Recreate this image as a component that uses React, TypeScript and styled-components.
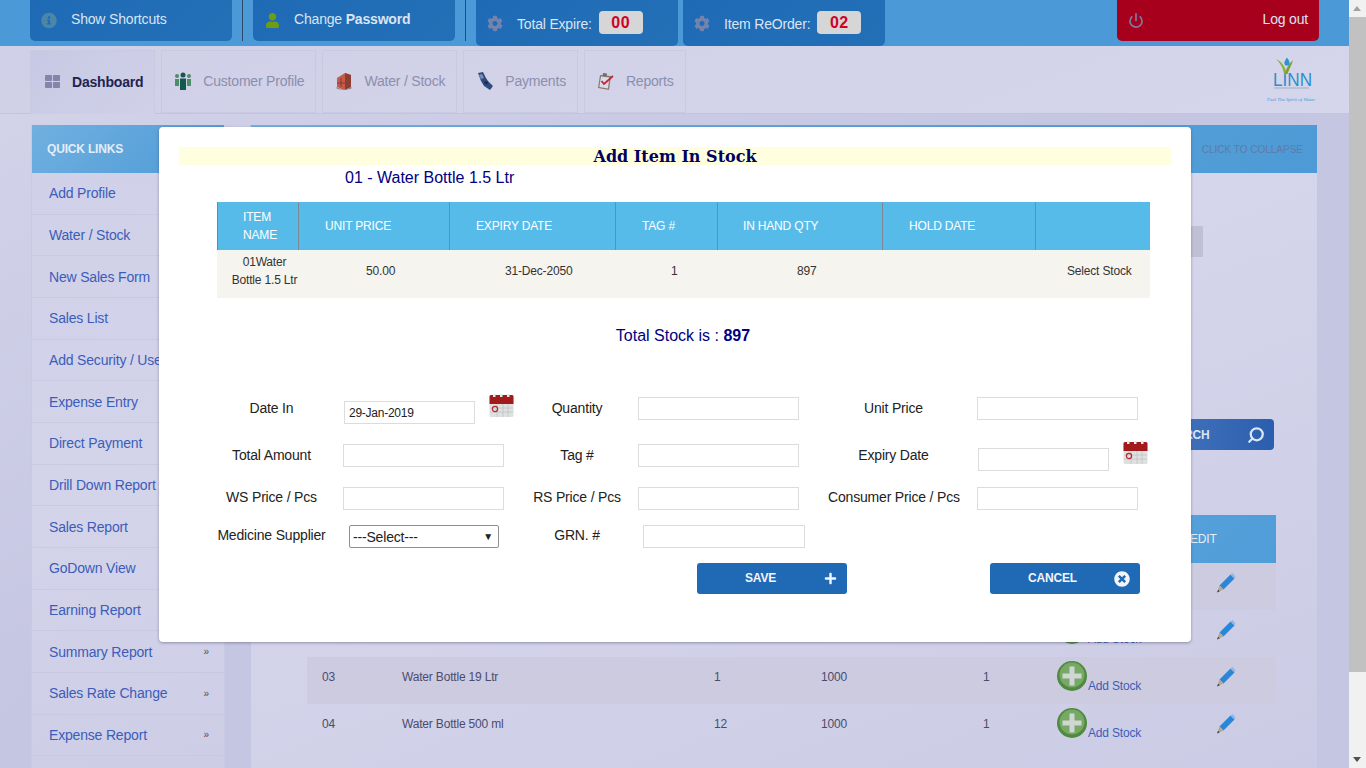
import React from "react"
import styled, { createGlobalStyle } from "styled-components"
import { FaCog, FaInfoCircle, FaPlus, FaThLarge, FaTimesCircle, FaUser } from "react-icons/fa"
import { Power, Search } from "lucide-react"

const GlobalStyle = createGlobalStyle`
  * {
    box-sizing: border-box;
  }

  html,
  body {
    margin: 0;
    height: 100%;
    overflow: hidden;
  }

  body {
    font-family: "Liberation Sans", Arial, sans-serif;
    font-size: 14px;
    letter-spacing: -0.18px;
  }
`

const Shell = styled.div`
  display: flex;
  height: 768px;
  overflow: hidden;
`

const Page = styled.div`
  position: relative;
  flex: 1;
  min-width: 0;
  background: linear-gradient(160deg, #cfcfe7 0%, #d5d6eb 48%, #cbcbe5 100%);
`

const ScrollTrack = styled.div`
  position: relative;
  width: 17px;
  background: #f1f1f1;
`

const ScrollThumb = styled.div`
  position: absolute;
  top: 17px;
  left: 0;
  width: 17px;
  height: 655px;
  background: #c1c1c1;
`

const ScrollArrow = styled.div<{ $down?: boolean }>`
  position: absolute;
  left: 4px;
  width: 0;
  height: 0;
  border-left: 4.5px solid transparent;
  border-right: 4.5px solid transparent;
  ${(p) =>
    p.$down
      ? "bottom: 6px; border-top: 5px solid #505050;"
      : "top: 6px; border-bottom: 5px solid #a3a3a3;"}
`

const TopBar = styled.div`
  display: flex;
  height: 46px;
  padding: 0 30px;
  background: #4b99d6;
`

const TopButton = styled.div<{ $tall?: boolean; $danger?: boolean }>`
  display: flex;
  align-items: center;
  width: 202px;
  height: ${(p) => (p.$tall ? 46 : 41)}px;
  padding: 0 11px;
  border-radius: 0 0 5px 5px;
  color: #dbe4f2;
  background: ${(p) => (p.$danger ? "#a6001c" : "linear-gradient(135deg, #1e6ab5, #2470b7)")};
`

const TopIcon = styled.span<{ $color: string }>`
  display: flex;
  justify-content: center;
  width: 16px;
  margin-right: 14px;
  color: ${(p) => p.$color};
`

const TopText = styled.span<{ $drop?: boolean }>`
  margin-top: ${(p) => (p.$drop ? 1 : -3)}px;
  white-space: nowrap;
`

const LogoutText = styled(TopText)`
  margin-left: auto;
`

const TopDivider = styled.div`
  width: 1px;
  height: 41px;
  margin: 0 10px;
  background: #2b4a6b;
`

const CountBadge = styled.span`
  display: flex;
  align-items: center;
  justify-content: center;
  width: 44px;
  height: 23px;
  margin-left: 7px;
  border-radius: 4px;
  background: #d6d6d6;
  color: #d0002a;
  font-size: 16px;
  font-weight: 700;
  letter-spacing: 0.5px;
`

const ExpireButton = styled(TopButton)`
  margin-right: 5px;

  ${CountBadge} {
    margin-top: -1px;
  }
`

const LogoutButton = styled(TopButton)`
  margin-left: auto;
  padding-right: 11px;
`

const NavBar = styled.div`
  display: flex;
  height: 68px;
  padding: 4px 32px 0 30px;
  border-bottom: 1px solid #c3c4df;
  letter-spacing: -0.2px;
`

const Tab = styled.div<{ $active?: boolean }>`
  display: flex;
  align-items: center;
  gap: 10px;
  margin-right: 6px;
  padding: 0 11px 2px;
  border: 1px solid #c9cae2;
  border-bottom: ${(p) => (p.$active ? "none" : "1px solid #c9cae2")};
  background: ${(p) => (p.$active ? "linear-gradient(135deg, #c7c8e3, #d0d1e8)" : "transparent")};
  color: ${(p) => (p.$active ? "#1f2350" : "#8b8fae")};
  font-weight: ${(p) => (p.$active ? 700 : 400)};
  height: ${(p) => (p.$active ? "64px" : "63px")};
`

const TabIcon = styled.span<{ $color?: string }>`
  display: flex;
  justify-content: center;
  width: 20px;
  color: ${(p) => p.$color || "inherit"};
`

const Logo = styled.div`
  margin: 5px 0 0 auto;
`

const Body = styled.div`
  display: flex;
  gap: 25px;
  height: 654px;
  padding: 11px 31px 0 31px;
  background: linear-gradient(150deg, #d2d2e9 0%, #c5c6e2 42%);
`

const Sidebar = styled.div`
  flex: none;
  width: 194px;
  background: linear-gradient(170deg, #d0d0e8, #d3d4ea 60%, #cdcde6);
  border-right: 1px solid #c8c9e2;
  border-left: 1px solid #c8c9e2;
`

const BlueHeader = styled.div`
  display: flex;
  align-items: center;
  height: 48px;
  padding: 0 15px;
  background: linear-gradient(135deg, #71b0e0, #4c9ad6);
`

const QuickTitle = styled.span`
  color: #e3edf7;
  font-size: 12px;
  font-weight: 700;
`

const CollapseText = styled.span`
  margin: 0 -1px 0 auto;
  color: #5f7ba6;
  font-size: 10px;
  letter-spacing: 0;
`

const SideItem = styled.div`
  display: flex;
  align-items: center;
  justify-content: space-between;
  height: 41.67px;
  padding: 0 15px 0 17px;
  border-bottom: 1px solid #c8c9e2;
  color: #3b5db9;
  white-space: nowrap;
`

const Chevron = styled.span`
  color: #4a4a60;
  font-size: 10px;
`

const MainPanel = styled.div`
  flex: 1;
  min-width: 0;
  height: 643px;
  border-right: 1px solid #c4c5e0;
  border-left: 1px solid #c4c5e0;
  background: linear-gradient(160deg, #d3d4ea, #d5d6eb 40%, #cbcbe5);
`

const PanelBody = styled.div`
  display: flex;
  flex-direction: column;
  height: 595px;
  padding: 53px 41px 0 56px;
`

const GreyStub = styled.div`
  align-self: flex-end;
  width: 60px;
  height: 31px;
  margin-right: 73px;
  background: #c0c0d4;
`

const SearchButton = styled.div`
  display: flex;
  align-items: center;
  justify-content: space-between;
  align-self: flex-end;
  width: 150px;
  height: 31px;
  margin: 162px 2px 0 0;
  padding: 0 9px 0 36px;
  border-radius: 0 4px 4px 0;
  background: linear-gradient(90deg, #4f7cc2, #2a5eae);
  color: #dde6f3;
  font-size: 12px;
  font-weight: 700;
`

const StockTable = styled.div`
  margin-top: 65px;
`

const StockRow = styled.div<{ $head?: boolean; $shade?: boolean }>`
  display: grid;
  grid-template-columns: 95px 312px 107px 162px 74px 159px 60px;
  height: ${(p) => (p.$head ? 48 : 47)}px;
  padding-top: ${(p) => (p.$head ? 0 : 10)}px;
  background: ${(p) =>
    p.$head
      ? "linear-gradient(135deg, #78b4e2, #4f9dd9)"
      : p.$shade
        ? "#cdcbe0"
        : "transparent"};
  color: #4b4b6e;
  font-size: 12px;
  line-height: 20px;
`

const RowCode = styled.span`
  padding-left: 15px;
`

const HeadEdit = styled.span`
  grid-column: 6 / 8;
  align-self: center;
  padding-left: 133px;
  color: #e3edf7;
`

const AddStock = styled.span`
  display: flex;
  align-items: flex-end;
  margin-top: -6px;
  height: 30px;
  color: #3b5db9;
`

const AddStockLabel = styled.span`
  margin: 0 0 -2px 1px;
  line-height: 14px;
`

const EditCell = styled.span`
  display: flex;
`

const Modal = styled.div`
  position: absolute;
  top: 127px;
  left: 159px;
  width: 1032px;
  height: 515px;
  padding: 20px 20px 0;
  border-radius: 4px;
  background: #fff;
  box-shadow: 0 1px 3px rgba(60, 60, 90, 0.45);
`

const ModalTitle = styled.div`
  height: 18px;
  background: #ffffe0;
  color: #000060;
  font-family: "DejaVu Serif", "Liberation Serif", serif;
  font-size: 16px;
  font-weight: 700;
  letter-spacing: 0;
  line-height: 20px;
  text-align: center;
`

const ItemName = styled.div`
  height: 37px;
  padding: 4px 0 0 166px;
  color: #000080;
  font-size: 16px;
  letter-spacing: 0;
  line-height: 18px;
`

const Grid = styled.div`
  margin: 0 21px 0 38px;
  font-size: 12px;
`

const GridRow = styled.div<{ $head?: boolean }>`
  display: grid;
  grid-template-columns: 81px 151px 166px 102px 165px 153px 115px;
  align-items: center;
  height: 48px;
  padding-bottom: ${(p) => (p.$head ? 0 : 6)}px;
  background: ${(p) => (p.$head ? "#57bbea" : "#f5f4ef")};
  color: ${(p) => (p.$head ? "#fff" : "#333")};
  line-height: 18px;
`

const HeadCell = styled.div<{ $inset?: number }>`
  display: flex;
  align-items: center;
  height: 100%;
  padding-left: ${(p) => p.$inset || 0}px;
  border-left: 1px solid #7d8794;
`

const NameHead = styled(HeadCell)`
  padding-right: 25px;
`

const DataCell = styled.div<{ $inset?: number; $center?: boolean }>`
  padding-left: ${(p) => p.$inset || 0}px;
  text-align: ${(p) => (p.$center ? "center" : "left")};
  white-space: nowrap;
`

const TotalLine = styled.div`
  height: 99px;
  padding: 29px 0 0 16px;
  color: #000080;
  font-size: 16px;
  letter-spacing: 0;
  line-height: 18px;
  text-align: center;
`

const FormGrid = styled.div`
  display: grid;
  grid-template-columns: 109px 198px 106px 198px 131px 191px;
  grid-template-rows: 47px 43px 38px 38px;
  margin-left: 38px;
  color: #222;
`

const FieldLabel = styled.div<{ $up?: boolean }>`
  margin-top: ${(p) => (p.$up ? -1 : 0)}px;
  line-height: 23px;
  text-align: center;
  white-space: nowrap;
`

const Field = styled.div<{ $inset: number; $drop?: boolean }>`
  display: flex;
  align-items: flex-start;
  gap: 14px;
  padding-left: ${(p) => p.$inset}px;
  padding-top: ${(p) => (p.$drop ? 4 : 0)}px;
`

const TextInput = styled.input<{ $narrow?: boolean }>`
  width: ${(p) => (p.$narrow ? 131 : 161)}px;
  height: 23px;
  padding: 0 4px;
  border: 1px solid #dcdcdc;
  outline: none;
  background: #fff;
  color: #222;
  font-family: inherit;
  font-size: 12px;
  letter-spacing: -0.25px;
`

const WideInput = styled(TextInput)`
  width: 162px;
`

const DateIcon = styled.span`
  display: flex;
  margin-top: -8px;
`

const SupplierSelect = styled.div`
  display: flex;
  align-items: center;
  justify-content: space-between;
  width: 150px;
  height: 23px;
  padding: 0 5px 0 3px;
  border: 1px solid #8f8f8f;
  border-radius: 2px;
  color: #222;
`

const SelectArrow = styled.span`
  font-size: 10px;
`

const Actions = styled.div`
  display: flex;
  justify-content: flex-end;
  gap: 143px;
  margin-right: 31px;
`

const ActionButton = styled.div<{ $inset: number }>`
  display: flex;
  align-items: center;
  justify-content: space-between;
  width: 150px;
  height: 31px;
  padding: 0 10px 0 ${(p) => p.$inset}px;
  border-radius: 3px;
  background: #2069b5;
  color: #f2f5fa;
  font-size: 12px;
  font-weight: 700;
`

const ActionLabel = styled.span`
  margin-top: -2px;
`

const Calendar = () => (
  <svg width="25" height="25" viewBox="0 0 25 25">
    <rect x="0.5" y="2" width="24" height="22" rx="1.5" fill="#dfe0e0" />
    <path d="M.5 11V3.500A1.500 1.500 0 0 1 2 2h21a1.500 1.500 0 0 1 1.500 1.500V11z" fill="#a31a1c" />
    <path d="M4 1h2.500v3H4zM11 1h2.500v3H11zM18 1h2.500v3H18z" fill="#e8e8e8" />
    <path d="M1 15h23M1 19h23M8 11v13M14 11v13M19 11v13" stroke="#bfc4c8" strokeWidth="0.8" />
    <circle cx="6" cy="16" r="2.600" fill="none" stroke="#b8272b" strokeWidth="1.2" />
  </svg>
)

const Pencil = () => (
  <svg width="20" height="20" viewBox="0 0 20 20">
    <path d="M3.500 12.500 14.500 1.500l4 4-11 11z" fill="#2a86d6" />
    <path d="M14.500 1.500 16.500 0l3 3.500-1 2z" fill="#8fb6e6" />
    <path d="M3.500 12.500l4 4L1 19.500z" fill="#b9a88f" />
    <path d="M2.200 16.800 1 19.500l2.800-1.200z" fill="#3c3c48" />
  </svg>
)

const AddCircle = () => (
  <svg width="30" height="30" viewBox="0 0 30 30">
    <circle cx="15" cy="15" r="15" fill="#4f8b3f" />
    <circle cx="15" cy="14" r="12.500" fill="#76a866" />
    <path d="M12.500 5.500h5v7h7v5h-7v7h-5v-7h-7v-5h7z" fill="#cfd6d4" />
  </svg>
)

const People = () => (
  <svg width="18" height="18" viewBox="0 0 18 18">
    <g fill="#4f8d68">
      <circle cx="3" cy="4" r="2" />
      <circle cx="15" cy="4" r="2" />
      <path d="M1 7h4v7H1zM13 7h4v7h-4z" />
    </g>
    <g fill="#14574f">
      <circle cx="9" cy="3" r="2.500" />
      <path d="M6 6.500h6V18H6z" />
    </g>
  </svg>
)

const Crate = () => (
  <svg width="18" height="18" viewBox="0 0 18 18">
    <path d="M2 6l8-5 6 2v12l-7 3-7-3z" fill="#c45a4a" />
    <path d="M10 1l6 2v12l-6 3z" fill="#8e3d35" />
    <path d="M2 11h8M6 6v9" stroke="#7d332c" strokeWidth="0.8" />
    <path d="M1 15l8 3 8-3-1 2-7 1-7-1z" fill="#8a8a80" />
  </svg>
)

const PayHand = () => (
  <svg width="18" height="18" viewBox="0 0 18 18">
    <path d="M2 1l5-1 3 6 2 3 5 5-3 4-6-4-3-5z" fill="#2f4a7c" />
    <path d="M3 3l3-1 2 4-3 1z" fill="#7d8fb0" />
    <path d="M9 9l3 1-1 3-3-2z" fill="#182c58" />
  </svg>
)

const Clipboard = () => (
  <svg width="18" height="18" viewBox="0 0 18 18">
    <path d="M3 3l11 1-2 14-11-2z" fill="#8c7a6c" />
    <path d="M4 4.500l8.500 1-1.600 11-8.500-1.500z" fill="#d8dcec" />
    <path d="M6 1l4 .5-.4 3-4-.5z" fill="#6e6e78" />
    <path d="M4.500 9l2.500 3 9-8" fill="none" stroke="#c02a36" strokeWidth="1.8" />
  </svg>
)

const LinnLogo = () => (
  <svg width="52" height="50" viewBox="0 0 52 50">
    <text x="8" y="31" fill="#2b8fd0" fontFamily="Liberation Sans, sans-serif" fontSize="18" letterSpacing="0" textLength="39" lengthAdjust="spacingAndGlyphs">
      LINN
    </text>
    <path d="M19 19C18 12 15 8 11 4c5 2 10 8 10.500 15z" fill="#8fae3a" />
    <path d="M20 19c1-6 4-10 8-14-1 5-4 9-5.500 14z" fill="#7f9f34" />
    <path d="M22 2.500c1.800 2.500 2.600 4.200 2.600 5.500a2.600 2.600 0 0 1-5.200 0c0-1.300.8-3 2.600-5.500z" fill="#2e93d1" />
    <path d="M9 33h35" stroke="#8fa3b8" strokeWidth="0.8" />
    <text x="2" y="46" fill="#3a9ad6" fontFamily="Liberation Serif, serif" fontStyle="italic" fontSize="5" letterSpacing="0">
      Feel The Spirit of Water
    </text>
  </svg>
)

const sideLinks = [
  "Add Profile",
  "Water / Stock",
  "New Sales Form",
  "Sales List",
  "Add Security / User",
  "Expense Entry",
  "Direct Payment",
  "Drill Down Report",
  "Sales Report",
  "GoDown View",
  "Earning Report",
]

const sideMenus = ["Summary Report", "Sales Rate Change", "Expense Report"]

const stockRows = [
  { code: "01", name: "Water Bottle 1.5 Ltr", a: "1", b: "897", c: "1" },
  { code: "02", name: "", a: "", b: "", c: "" },
  { code: "03", name: "Water Bottle 19 Ltr", a: "1", b: "1000", c: "1" },
  { code: "04", name: "Water Bottle 500 ml", a: "12", b: "1000", c: "1" },
]

const App: React.FC = () => (
  <Shell>
    <GlobalStyle />
    <Page>
      <TopBar>
        <TopButton>
          <TopIcon $color="#4a86a8"><FaInfoCircle size={17} /></TopIcon>
          <TopText>Show Shortcuts</TopText>
        </TopButton>
        <TopDivider />
        <TopButton>
          <TopIcon $color="#6f9c18"><FaUser size={15} /></TopIcon>
          <TopText>Change <b>Password</b></TopText>
        </TopButton>
        <TopDivider />
        <ExpireButton $tall>
          <TopIcon $color="#7283ad"><FaCog size={17} /></TopIcon>
          <TopText $drop>Total Expire:</TopText>
          <CountBadge>00</CountBadge>
        </ExpireButton>
        <ExpireButton $tall>
          <TopIcon $color="#7283ad"><FaCog size={17} /></TopIcon>
          <TopText $drop>Item ReOrder:</TopText>
          <CountBadge>02</CountBadge>
        </ExpireButton>
        <LogoutButton $danger>
          <TopIcon $color="#8276a0"><Power size={17} strokeWidth={2.6} /></TopIcon>
          <LogoutText>Log out</LogoutText>
        </LogoutButton>
      </TopBar>

      <NavBar>
        <Tab $active>
          <TabIcon $color="#8385ab"><FaThLarge size={15} /></TabIcon>
          Dashboard
        </Tab>
        <Tab><TabIcon><People /></TabIcon>Customer Profile</Tab>
        <Tab><TabIcon><Crate /></TabIcon>Water / Stock</Tab>
        <Tab><TabIcon><PayHand /></TabIcon>Payments</Tab>
        <Tab><TabIcon><Clipboard /></TabIcon>Reports</Tab>
        <Logo><LinnLogo /></Logo>
      </NavBar>

      <Body>
        <Sidebar>
          <BlueHeader><QuickTitle>QUICK LINKS</QuickTitle></BlueHeader>
          {sideLinks.map((label) => (
            <SideItem key={label}>{label}</SideItem>
          ))}
          {sideMenus.map((label) => (
            <SideItem key={label}>
              {label}
              <Chevron>»</Chevron>
            </SideItem>
          ))}
        </Sidebar>

        <MainPanel>
          <BlueHeader><CollapseText>CLICK TO COLLAPSE</CollapseText></BlueHeader>
          <PanelBody>
            <GreyStub />
            <SearchButton>
              SEARCH
              <Search size={18} strokeWidth={3} style={{ transform: "scaleX(-1)" }} />
            </SearchButton>
            <StockTable>
              <StockRow $head><HeadEdit>EDIT</HeadEdit></StockRow>
              {stockRows.map((row, i) => (
                <StockRow key={row.code} $shade={i % 2 === 0}>
                  <RowCode>{row.code}</RowCode>
                  <span>{row.name}</span>
                  <span>{row.a}</span>
                  <span>{row.b}</span>
                  <span>{row.c}</span>
                  <AddStock>
                    <AddCircle />
                    <AddStockLabel>Add Stock</AddStockLabel>
                  </AddStock>
                  <EditCell><Pencil /></EditCell>
                </StockRow>
              ))}
            </StockTable>
          </PanelBody>
        </MainPanel>
      </Body>

      <Modal>
        <ModalTitle>Add Item In Stock</ModalTitle>
        <ItemName>01 - Water Bottle 1.5 Ltr</ItemName>
        <Grid>
          <GridRow $head>
            <NameHead $inset={25}>ITEM NAME</NameHead>
            <HeadCell $inset={26}>UNIT PRICE</HeadCell>
            <HeadCell $inset={26}>EXPIRY DATE</HeadCell>
            <HeadCell $inset={26}>TAG #</HeadCell>
            <HeadCell $inset={25}>IN HAND QTY</HeadCell>
            <HeadCell $inset={26}>HOLD DATE</HeadCell>
            <HeadCell />
          </GridRow>
          <GridRow>
            <DataCell $center $inset={14}>01Water<br />Bottle 1.5 Ltr</DataCell>
            <DataCell $inset={68}>50.00</DataCell>
            <DataCell $inset={56}>31-Dec-2050</DataCell>
            <DataCell $inset={56}>1</DataCell>
            <DataCell $inset={80}>897</DataCell>
            <DataCell />
            <DataCell $inset={32}>Select Stock</DataCell>
          </GridRow>
        </Grid>
        <TotalLine>Total Stock is : <b>897</b></TotalLine>
        <FormGrid>
          <FieldLabel>Date In</FieldLabel>
          <Field $inset={18} $drop>
            <TextInput $narrow readOnly value="29-Jan-2019" />
            <DateIcon><Calendar /></DateIcon>
          </Field>
          <FieldLabel>Quantity</FieldLabel>
          <Field $inset={8}><TextInput readOnly /></Field>
          <FieldLabel>Unit Price</FieldLabel>
          <Field $inset={18}><TextInput readOnly /></Field>

          <FieldLabel>Total Amount</FieldLabel>
          <Field $inset={17}><TextInput readOnly /></Field>
          <FieldLabel>Tag #</FieldLabel>
          <Field $inset={8}><TextInput readOnly /></Field>
          <FieldLabel>Expiry Date</FieldLabel>
          <Field $inset={19} $drop>
            <TextInput $narrow readOnly />
            <DateIcon><Calendar /></DateIcon>
          </Field>

          <FieldLabel $up>WS Price / Pcs</FieldLabel>
          <Field $inset={17}><TextInput readOnly /></Field>
          <FieldLabel $up>RS Price / Pcs</FieldLabel>
          <Field $inset={8}><TextInput readOnly /></Field>
          <FieldLabel $up>Consumer Price / Pcs</FieldLabel>
          <Field $inset={18}><TextInput readOnly /></Field>

          <FieldLabel $up>Medicine Supplier</FieldLabel>
          <Field $inset={23}>
            <SupplierSelect>
              ---Select---
              <SelectArrow>▼</SelectArrow>
            </SupplierSelect>
          </Field>
          <FieldLabel $up>GRN. #</FieldLabel>
          <Field $inset={13}><WideInput readOnly /></Field>
        </FormGrid>
        <Actions>
          <ActionButton $inset={48}>
            <ActionLabel>SAVE</ActionLabel>
            <FaPlus size={13} />
          </ActionButton>
          <ActionButton $inset={38}>
            <ActionLabel>CANCEL</ActionLabel>
            <FaTimesCircle size={16} />
          </ActionButton>
        </Actions>
      </Modal>
    </Page>
    <ScrollTrack>
      <ScrollArrow />
      <ScrollThumb />
      <ScrollArrow $down />
    </ScrollTrack>
  </Shell>
)

export default App
